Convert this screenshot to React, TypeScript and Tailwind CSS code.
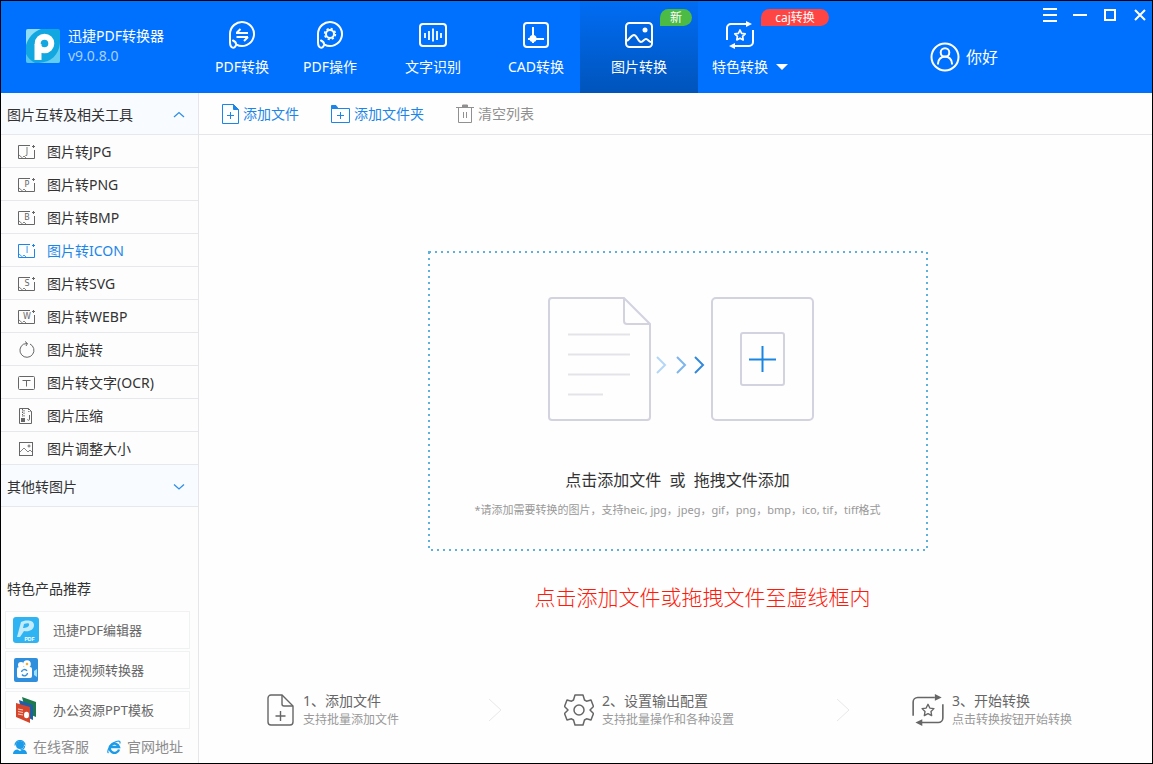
import React from 'react';

const imageTools = [
  { label: '图片转JPG', letter: 'J' },
  { label: '图片转PNG', letter: 'P' },
  { label: '图片转BMP', letter: 'B' },
  { label: '图片转ICON', letter: 'I', active: true },
  { label: '图片转SVG', letter: 'S' },
  { label: '图片转WEBP', letter: 'W' },
  { label: '图片旋转', icon: <RotateIcon /> },
  { label: '图片转文字(OCR)', icon: <OcrIcon /> },
  { label: '图片压缩', icon: <CompressIcon /> },
  { label: '图片调整大小', icon: <ResizeIcon /> },
];

const products = [
  { label: '迅捷PDF编辑器', icon: <EditorLogo /> },
  { label: '迅捷视频转换器', icon: <VideoLogo /> },
  { label: '办公资源PPT模板', icon: <PptLogo /> },
];

const tabs = [
  { label: 'PDF转换', icon: <PdfConvertIcon />, width: 'w-[88px]' },
  { label: 'PDF操作', icon: <PdfActionIcon />, width: 'w-[88px]' },
  { label: '文字识别', icon: <TextScanIcon />, width: 'w-[118px]' },
  { label: 'CAD转换', icon: <CadIcon />, width: 'w-[88px]' },
  { label: '图片转换', icon: <PictureIcon />, width: 'w-[118px]', active: true, badge: '新' },
];

const steps = [
  { title: '1、添加文件', desc: '支持批量添加文件', icon: <StepFileIcon /> },
  { title: '2、设置输出配置', desc: '支持批量操作和各种设置', icon: <StepGearIcon /> },
  { title: '3、开始转换', desc: '点击转换按钮开始转换', icon: <CycleIcon size={32} /> },
];

/* ---------- header icons ---------- */

function AppLogo() {
  return (
    <svg width="34" height="34" viewBox="0 0 34 34" aria-hidden="true">
      <rect width="34" height="34" rx="2" fill="#12a7e0" />
      <path d="M0 2a2 2 0 0 1 2-2h13C7 3 2 9 0 16z" fill="#8fdcf7" />
      <path d="M34 14v18a2 2 0 0 1-2 2H13c12-1 20-8 21-20z" fill="#62cdf3" />
      <path d="M0 25c2 4 5 7 9 9H2a2 2 0 0 1-2-2z" fill="#54c5f0" />
      <circle cx="18.500" cy="14.500" r="6.800" fill="none" stroke="#fff" strokeWidth="6" />
      <path d="M12 15v16" stroke="#fff" strokeWidth="7" />
    </svg>
  );
}

function PdfConvertIcon() {
  return (
    <svg width="28" height="28" viewBox="0 0 28 28" fill="none" stroke="currentColor" strokeWidth="2" aria-hidden="true">
      <path d="M2 22V13A12 12 0 1 1 8.500 23.700" />
      <path d="M2 21c0 7 5 7 6 3c.4-2-1-3.500-3-4.500" strokeLinecap="round" />
      <path d="M8 12h12M8.500 12l4-4M20 16H8.500M20 16l-4 4" />
    </svg>
  );
}

function PdfActionIcon() {
  return (
    <svg width="28" height="28" viewBox="0 0 28 28" fill="none" stroke="currentColor" strokeWidth="2" aria-hidden="true">
      <path d="M2 22V13A12 12 0 1 1 8.500 23.700" />
      <path d="M2 21c0 7 5 7 6 3c.4-2-1-3.500-3-4.500" strokeLinecap="round" />
      <circle cx="14" cy="13" r="4" />
      <circle cx="14" cy="13" r="5.400" strokeWidth="1.600" strokeDasharray="2.200 2.040" />
    </svg>
  );
}

function TextScanIcon() {
  return (
    <svg width="28" height="28" viewBox="0 0 28 28" fill="none" stroke="currentColor" strokeWidth="2" aria-hidden="true">
      <rect x="1" y="3" width="26" height="22" rx="3" />
      <path d="M6 12v5M10 10v9M14 7.500v13M18 10v9M22 12v5" strokeWidth="1.800" />
    </svg>
  );
}

function CadIcon() {
  return (
    <svg width="28" height="28" viewBox="0 0 28 28" fill="none" stroke="currentColor" strokeWidth="2" aria-hidden="true">
      <rect x="2" y="2" width="24" height="24" rx="3" />
      <path d="M11 6v12h11" />
      <circle cx="11" cy="17.500" r="3.500" fill="currentColor" stroke="none" />
      <path d="M6 18h5v4" />
    </svg>
  );
}

function PictureIcon() {
  return (
    <svg width="28" height="28" viewBox="0 0 28 28" fill="none" stroke="currentColor" strokeWidth="2" aria-hidden="true">
      <rect x="1" y="2" width="26" height="24" rx="3.500" />
      <path d="M2 20c4-4 5-6 7-6c3 0 4 7 7 7c2 0 3-3 5-3s3 3 5 3" />
      <circle cx="20" cy="9" r="2.500" fill="currentColor" stroke="none" />
    </svg>
  );
}

function CycleIcon({ size = 28 }: { size?: number }) {
  return (
    <svg width={size} height={size} viewBox="0 0 28 28" fill="none" stroke="currentColor" strokeWidth={size > 28 ? 1.4 : 2} aria-hidden="true">
      <path d="M1 19V7a4 4 0 0 1 4-4h15M27 9v12a4 4 0 0 1-4 4H8" />
      <path d="M20 0v6l6-3zM9 22v6l-6-3z" fill="currentColor" stroke="none" />
      <path
        d="M14 9l1.600 3.300 3.600.5-2.600 2.500.6 3.600-3.200-1.700-3.200 1.700.6-3.600-2.600-2.500 3.600-.5z"
        strokeWidth={size > 28 ? 1.2 : 1.7}
        strokeLinejoin="round"
      />
    </svg>
  );
}

function UserIcon() {
  return (
    <svg width="30" height="30" viewBox="0 0 30 30" fill="none" stroke="currentColor" strokeWidth="2" aria-hidden="true">
      <circle cx="15" cy="15" r="13.500" />
      <circle cx="15" cy="10.500" r="4.300" />
      <path d="M8 22.500v-1a7 7 0 0 1 14 0v1" />
    </svg>
  );
}

/* ---------- sidebar icons ---------- */

function FormatIcon({ letter }: { letter: string }) {
  return (
    <svg width="18" height="16" viewBox="0 0 18 16" fill="none" stroke="currentColor" aria-hidden="true">
      <path d="M12 1.500H.5v13h16V6" />
      <path d="M1 11l4 3.500M5 13l1-1 2.500 2.500" strokeWidth=".8" />
      <path d="M15.500 1v3M14 2.500h3" />
      <text x="9" y="10" textAnchor="middle" fontSize="8" fill="currentColor" stroke="none" fontFamily="DejaVu Sans">
        {letter}
      </text>
    </svg>
  );
}

function RotateIcon() {
  return (
    <svg width="18" height="18" viewBox="0 0 18 18" fill="none" stroke="currentColor" aria-hidden="true">
      <path d="M12 3A7 7 0 1 1 5.500 3.200L9 2.500" />
      <path d="M7 .5l2.500 2L8 5" />
    </svg>
  );
}

function OcrIcon() {
  return (
    <svg width="18" height="16" viewBox="0 0 18 16" fill="none" stroke="currentColor" aria-hidden="true">
      <rect x=".5" y="1.500" width="16" height="13" rx="1" />
      <path d="M4.500 5.500h8M8.500 5.500v6" />
    </svg>
  );
}

function CompressIcon() {
  return (
    <svg width="18" height="18" viewBox="0 0 18 18" fill="none" stroke="currentColor" aria-hidden="true">
      <path d="M1.500 1.500h9l3 3v12h-12z" />
      <path d="M10.500 1.500v3h3M4.500 2v8M6 3v7" strokeDasharray="1.500 1" />
      <path d="M3 11h4v4H3z" fill="currentColor" stroke="none" />
      <path d="M11.500 8v4.500c0 1-2 1-2 0" />
    </svg>
  );
}

function ResizeIcon() {
  return (
    <svg width="18" height="16" viewBox="0 0 18 16" fill="none" stroke="currentColor" aria-hidden="true">
      <rect x="1.500" y="1.500" width="13" height="13" />
      <path d="M2 11l4-4 4 4 2-2 2.500 2.500" strokeWidth=".8" />
      <circle cx="11" cy="5" r="1" />
    </svg>
  );
}

function Chevron({ up }: { up?: boolean }) {
  return (
    <svg width="12" height="8" viewBox="0 0 12 8" fill="none" stroke="#2f8ee8" aria-hidden="true">
      <path d={up ? 'M1 6l5-4.500L11 6' : 'M1 1.500L6 6l5-4.500'} strokeWidth="1.300" />
    </svg>
  );
}

function EditorLogo() {
  return (
    <svg width="26" height="26" viewBox="0 0 26 26" aria-hidden="true">
      <rect width="26" height="26" rx="3" fill="#2fb4f3" />
      <path d="M4 20L8 5c3-2 13-3 13 3c0 5-5 7-10 6l-4 6z" fill="#c4ebfc" />
      <path d="M10 11l1-4c3-1 6-1 5 1c0 2-3 3-6 3z" fill="#2fb4f3" />
      <text x="16.500" y="23.500" textAnchor="middle" fontSize="5" fill="#fff" fontFamily="Liberation Sans" fontWeight="700">
        PDF
      </text>
    </svg>
  );
}

function VideoLogo() {
  return (
    <svg width="26" height="26" viewBox="0 0 26 26" aria-hidden="true">
      <rect x="1" y="1" width="24" height="24" rx="2" fill="#2f8fdd" />
      <circle cx="8" cy="8" r="3" fill="#fff" />
      <circle cx="14" cy="7" r="3.800" fill="#fff" />
      <circle cx="14" cy="7" r="1.300" fill="#f0b030" />
      <rect x="4" y="10" width="15" height="11" rx="2" fill="#fff" />
      <path d="M21 14l3-2v8l-3-2z" fill="#9fe0ff" />
      <path d="M8.500 15a3 3 0 0 1 5.500-1M14.500 16a3 3 0 0 1-5.500 1.500" fill="none" stroke="#2f8fdd" strokeWidth="1.400" />
    </svg>
  );
}

function PptLogo() {
  return (
    <svg width="26" height="26" viewBox="0 0 26 26" aria-hidden="true">
      <path d="M9 0l14 5v15l-10-4z" fill="#1e7a4c" />
      <path d="M6 3l14 5v15L9 18z" fill="#1f5ea8" />
      <path d="M3 6l14 4v16L3 20z" fill="#d5452b" />
      <path d="M5 12l5 1M5 14.500l5 1M5 17l5 1" stroke="#f6c9bd" strokeWidth="1.200" />
      <ellipse cx="13.500" cy="18" rx="2.500" ry="3.200" fill="#fff" />
    </svg>
  );
}

function ServiceIcon() {
  return (
    <svg width="14" height="14" viewBox="0 0 14 14" fill="#1c9be8" aria-hidden="true">
      <circle cx="7" cy="5" r="4" />
      <path d="M2 5.500a5 5 0 0 1 10 0M11.500 6c0 2.500-1.500 3.500-4 3.500" fill="none" stroke="#1c9be8" strokeWidth="1.200" />
      <path d="M0 14c0-3 2-4.300 4.500-4.500L7 11l2.500-1.500C12 9.700 14 11 14 14z" />
    </svg>
  );
}

function BrowserIcon() {
  return (
    <svg width="14" height="14" viewBox="0 0 14 14" fill="none" stroke="#1c9be8" aria-hidden="true">
      <path d="M12 9.500A4.700 4.700 0 1 1 12 7H4" strokeWidth="2.400" />
      <path d="M1.500 13C-1 11 5 1.500 11.500 1c1.500 0 1.800 1 1.300 2.500" strokeWidth="1.200" />
    </svg>
  );
}

/* ---------- toolbar icons ---------- */

function AddFileIcon() {
  return (
    <svg width="17" height="20" viewBox="0 0 17 20" fill="none" stroke="currentColor" aria-hidden="true">
      <path d="M.5.500h11l5 5v14H.5z" />
      <path d="M11.500.500v5h5z" fill="currentColor" />
      <path d="M8.500 8v7M5 11.500h7" />
    </svg>
  );
}

function AddFolderIcon() {
  return (
    <svg width="19" height="18" viewBox="0 0 19 18" fill="none" stroke="currentColor" aria-hidden="true">
      <path d="M.5 3.500h18v14H.5z" />
      <path d="M.5 3.500v-3H5l2 3z" fill="currentColor" />
      <path d="M9.500 7v7M6 10.500h7" />
    </svg>
  );
}

function TrashIcon() {
  return (
    <svg width="18" height="19" viewBox="0 0 18 19" fill="none" stroke="currentColor" aria-hidden="true">
      <path d="M2.500 3.500h13v15h-13zM0 3.500h18" />
      <path d="M6.500 1h5v2h-5z" fill="currentColor" />
      <path d="M7.500 8v6M10.500 8v6" />
    </svg>
  );
}

/* ---------- main area drawings ---------- */

function DropIllustration() {
  return (
    <svg width="272" height="124" viewBox="-6 0 272 124" fill="none" stroke="#d2d3df" strokeWidth="2" aria-hidden="true">
      <path d="M76 1H4a3 3 0 0 0-3 3v116a3 3 0 0 0 3 3h95a3 3 0 0 0 3-3V27z" />
      <path d="M76 1v23a3 3 0 0 0 3 3h23" />
      <path d="M20 37.500h62M20 57.500h62M20 77.500h62M20 97.500h35" stroke="#e3e3e8" />
      <path d="M109 60l8 8-8 8" stroke="#b5d7f7" />
      <path d="M129 60l8 8-8 8" stroke="#7db5ec" />
      <path d="M147 60l8 8-8 8" stroke="#3488da" />
      <rect x="164" y="1" width="101" height="122" rx="4" />
      <rect x="193" y="36" width="43" height="52" rx="2" />
      <path d="M214.500 49v26M201 62.500h27" stroke="#1a86e0" />
    </svg>
  );
}

function StepFileIcon() {
  return (
    <svg width="28" height="32" viewBox="0 0 28 32" fill="none" stroke="currentColor" strokeWidth="1.400" aria-hidden="true">
      <path d="M15 1H4a3 3 0 0 0-3 3v24a3 3 0 0 0 3 3h19a3 3 0 0 0 3-3V12z" />
      <path d="M15 1v9a2 2 0 0 0 2 2h9M13.500 17v10M8.500 22h10" />
    </svg>
  );
}

function StepGearIcon() {
  return (
    <svg width="30" height="32" viewBox="0 0 30 32" fill="none" stroke="currentColor" strokeWidth="1.500" strokeLinejoin="round" aria-hidden="true">
      <path d="M11 1h8l1.500 5 2 1.200L27 6l2.500 6.500L26 16l3.500 3.500L27 26l-4.500-1.200-2 1.200L19 31h-8l-1.500-5-2-1.200L3 26 .5 19.500 4 16 .5 12.500 3 6l4.500 1.200 2-1.200z" />
      <circle cx="15" cy="16" r="5" />
    </svg>
  );
}

/* ---------- page parts ---------- */

function Header() {
  return (
    <header className="flex h-[92px] shrink-0 bg-[#0071ff] text-white">
      <div className="flex w-[197px] shrink-0 items-center gap-2 pb-0.5 pl-[25px]">
        <AppLogo />
        <div className="text-sm leading-5">
          <h1>迅捷PDF转换器</h1>
          <p className="text-[#a9d0ff]">v9.0.8.0</p>
        </div>
      </div>

      <nav className="flex shrink-0">
        {tabs.map((tab) => (
          <button
            key={tab.label}
            className={`relative flex flex-col items-center gap-2 pt-5 text-sm leading-5 ${tab.width} ${
              tab.active ? 'bg-linear-to-b from-[#006df5] to-[#0054bb]' : ''
            }`}
          >
            {tab.icon}
            {tab.label}
            {tab.badge && (
              <span className="absolute top-2 right-1.5 w-8 rounded-t-full rounded-br-full bg-[#4cbb45] text-center text-xs leading-[17px]">
                {tab.badge}
              </span>
            )}
          </button>
        ))}
        <button className="relative flex flex-col items-start gap-2 px-3.5 pt-5 text-sm leading-5">
          <span className="pl-3.5">
            <CycleIcon />
          </span>
          <span className="flex items-center gap-2">
            特色转换
            <svg width="12" height="6" viewBox="0 0 12 6" fill="currentColor" aria-hidden="true">
              <path d="M0 0h12L6 6z" />
            </svg>
          </span>
          <span className="absolute top-2 left-[63px] w-[68px] rounded-t-full rounded-br-full bg-[#ff4444] text-center text-xs leading-[17px]">
            caj转换
          </span>
        </button>
      </nav>

      <div className="ml-auto flex">
        <button className="mr-10 flex items-center gap-1.5 pt-5 text-base">
          <UserIcon />
          你好
        </button>
        <div className="flex items-start gap-1.5">
          <button aria-label="菜单" className="flex h-7 w-6 items-center justify-center">
            <svg width="14" height="14" stroke="currentColor" strokeWidth="2">
              <path d="M0 1h14M0 7h14M0 13h14" />
            </svg>
          </button>
          <button aria-label="最小化" className="flex h-7 w-6 items-center justify-center">
            <svg width="14" height="14" stroke="currentColor" strokeWidth="2">
              <path d="M0 7h14" />
            </svg>
          </button>
          <button aria-label="最大化" className="flex h-7 w-6 items-center justify-center">
            <svg width="12" height="12" fill="none" stroke="currentColor" strokeWidth="2">
              <path d="M1 1h10v10H1z" />
            </svg>
          </button>
          <button aria-label="关闭" className="flex h-7 w-6 items-center justify-center">
            <svg width="12" height="12" stroke="currentColor" strokeWidth="2">
              <path d="M1 1l10 10M11 1L1 11" />
            </svg>
          </button>
        </div>
      </div>
    </header>
  );
}

function Sidebar() {
  return (
    <aside className="flex w-[198px] shrink-0 flex-col border-r border-[#e4e6ea] bg-[#fdfdfe] text-sm text-[#333]">
      <button className="flex h-[42px] items-center justify-between border-b border-[#e6e8ec] bg-[#f8fbff] pt-0.5 pr-[13px] pl-1.5">
        图片互转及相关工具
        <Chevron up />
      </button>
      <ul>
        {imageTools.map((tool) => (
          <li key={tool.label} className="border-b border-[#e6e8ec]">
            <button className={`flex h-8 w-full items-center gap-[11px] pt-0.5 pl-[17px] ${tool.active ? 'text-[#1c86e8]' : ''}`}>
              <span className={tool.active ? '' : 'text-[#666]'}>{tool.icon ?? <FormatIcon letter={tool.letter ?? ''} />}</span>
              {tool.label}
            </button>
          </li>
        ))}
      </ul>
      <button className="flex h-[42px] items-center justify-between border-b border-[#e6e8ec] bg-[#f8fbff] pt-0.5 pr-[13px] pl-1.5">
        其他转图片
        <Chevron />
      </button>

      <div className="mt-auto pt-8 text-[#666]">
        <h2 className="pl-1.5 text-[#333]">特色产品推荐</h2>
        <div className="mt-3 mr-2 ml-1 flex flex-col gap-0.5 text-[13px]">
          {products.map((p) => (
            <a key={p.label} href="#" className="flex h-[38px] items-center gap-3.5 border border-[#f0f1f3] bg-[#fefefe] pl-[7px]">
              {p.icon}
              {p.label}
            </a>
          ))}
        </div>
        <div className="flex gap-[18px] pt-2 pb-1.5 pl-3 text-[#8c8c8c]">
          <a href="#" className="flex items-center gap-1.5">
            <ServiceIcon />
            在线客服
          </a>
          <a href="#" className="flex items-center gap-1.5">
            <BrowserIcon />
            官网地址
          </a>
        </div>
      </div>
    </aside>
  );
}

function DropZone() {
  return (
    <button className="relative flex w-[500px] flex-col items-center pt-[46px] pb-[33px]">
      <svg className="absolute inset-0 h-full w-full" fill="none" aria-hidden="true">
        <rect x="1" y="1" width="498" height="298" stroke="#5fb0dc" strokeWidth="2" strokeDasharray="2 4" />
      </svg>
      <DropIllustration />
      <span className="mt-[47px] text-base leading-6 whitespace-pre text-[#333]">点击添加文件  或  拖拽文件添加</span>
      <span className="mt-2.5 text-[11px] leading-4 text-[#999]">
        *请添加需要转换的图片，支持heic, jpg，jpeg，gif，png，bmp，ico, tif，tiff格式
      </span>
    </button>
  );
}

export default function App() {
  return (
    <div className="flex min-h-screen flex-col border border-black bg-[#fefefe] font-normal font-['Noto_Sans','Noto_Sans_CJK_SC',sans-serif]">
      <Header />
      <div className="flex flex-1">
        <Sidebar />
        <main className="flex min-w-0 flex-1 flex-col">
          <div className="flex h-[42px] items-center gap-8 border-b border-[#e4e6ea] pl-[23px] text-sm text-[#1c86e8]">
            <button className="flex items-center gap-1">
              <AddFileIcon />
              添加文件
            </button>
            <button className="flex items-center gap-1">
              <AddFolderIcon />
              添加文件夹
            </button>
            <button className="flex items-center gap-1 text-[#909090]">
              <TrashIcon />
              清空列表
            </button>
          </div>

          <div className="flex flex-col items-center pt-[116px] pl-1">
            <DropZone />
            <p className="mt-8 pl-[50px] text-[21px] leading-7 font-light text-[#ff1a0a]">点击添加文件或拖拽文件至虚线框内</p>
          </div>

          <ol className="mt-auto grid grid-cols-[297fr_348fr_240fr] pb-[34px] pl-[68px] text-[#666]">
            {steps.map((step, i) => (
              <li key={step.title} className="flex items-center gap-2">
                {step.icon}
                <div>
                  <h3 className="text-sm leading-5">{step.title}</h3>
                  <p className="text-xs leading-[18px] text-[#999]">{step.desc}</p>
                </div>
                {i < steps.length - 1 && (
                  <svg width="14" height="24" viewBox="0 0 14 24" className="mr-[62px] ml-auto" fill="none" stroke="#e8e8ea" aria-hidden="true">
                    <path d="M1 1l12 11L1 23" />
                  </svg>
                )}
              </li>
            ))}
          </ol>
        </main>
      </div>
    </div>
  );
}
